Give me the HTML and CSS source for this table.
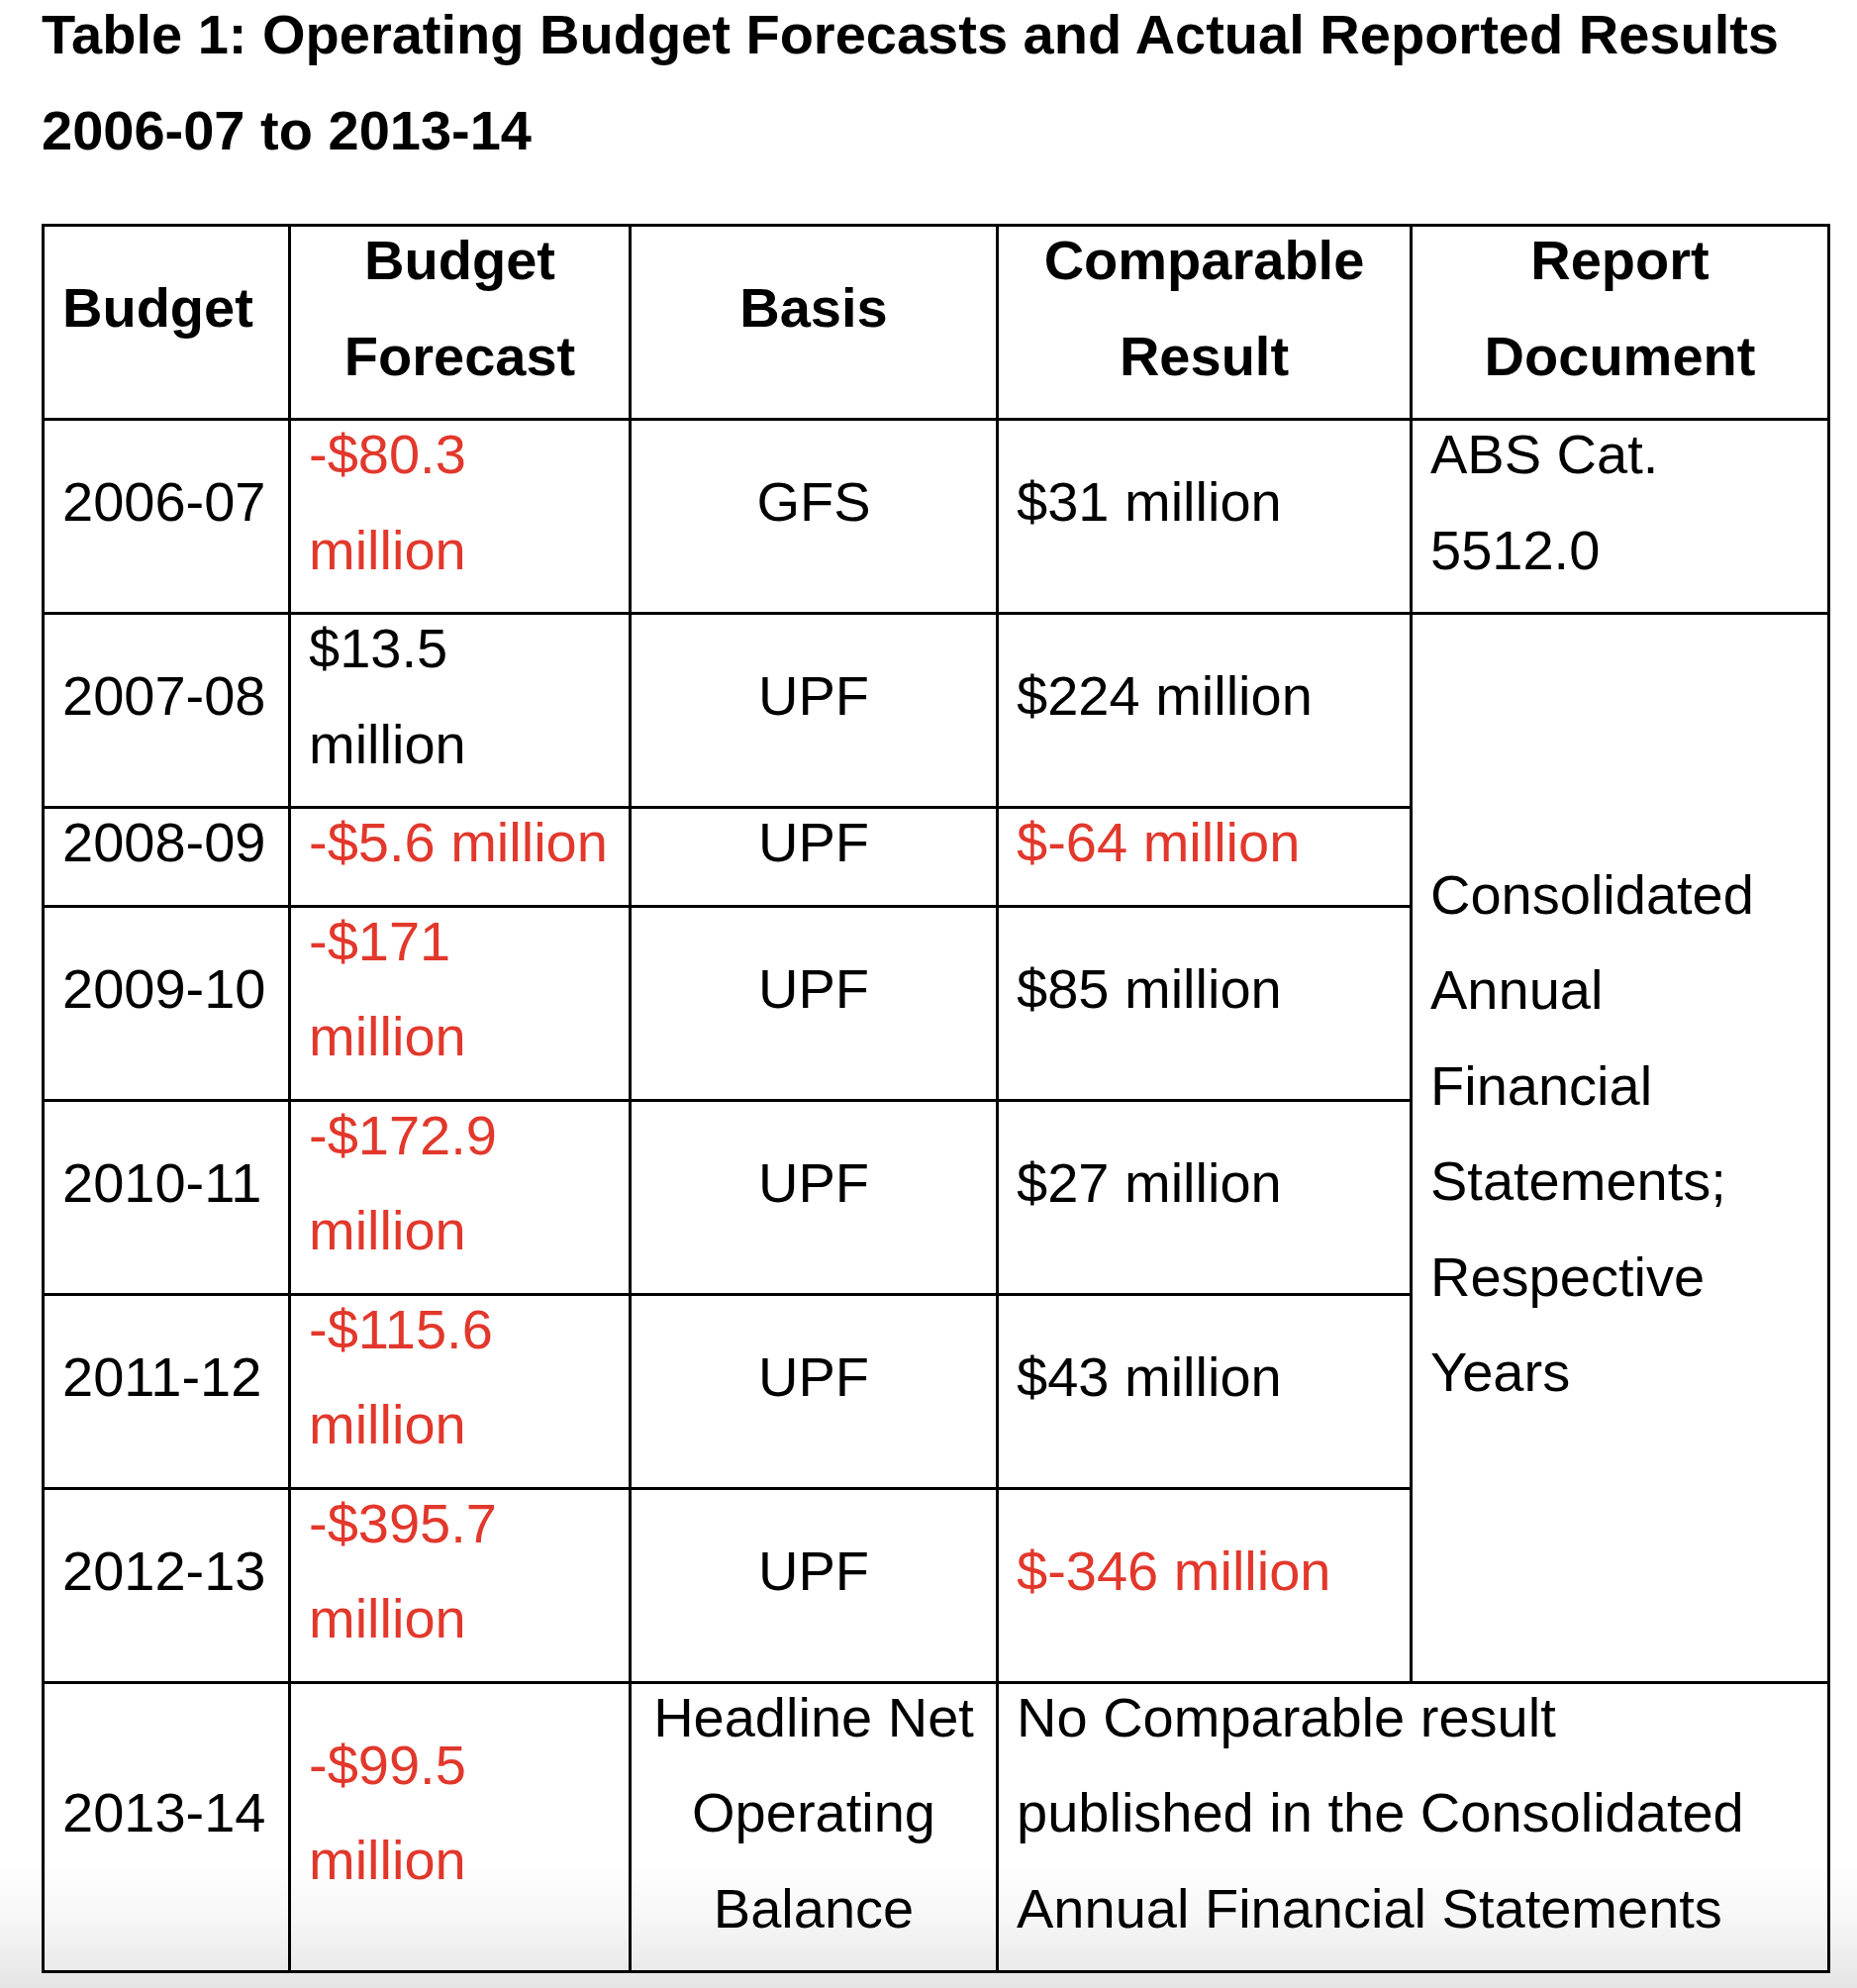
FILE: index.html
```html
<!DOCTYPE html>
<html lang="en">
<head>
<meta charset="utf-8">
<title>Table 1: Operating Budget Forecasts and Actual Reported Results</title>
<link rel="stylesheet" href="styles.css">
</head>
<body>
<div class="page">
  <h1 class="title">Table 1: Operating Budget Forecasts and Actual Reported Results 2006-07 to 2013-14</h1>
  <table class="budget-table">
    <colgroup>
      <col class="w-budget">
      <col class="w-forecast">
      <col class="w-basis">
      <col class="w-result">
      <col class="w-report">
    </colgroup>
    <thead>
      <tr>
        <th class="left"><div class="c">Budget</div></th>
        <th><div class="c">Budget Forecast</div></th>
        <th><div class="c">Basis</div></th>
        <th><div class="c">Comparable Result</div></th>
        <th><div class="c">Report Document</div></th>
      </tr>
    </thead>
    <tbody>
      <tr>
        <td><div class="c">2006-07</div></td>
        <td class="neg"><div class="c">-$80.3 million</div></td>
        <td class="center"><div class="c">GFS</div></td>
        <td><div class="c">$31 million</div></td>
        <td><div class="c">ABS Cat. 5512.0</div></td>
      </tr>
      <tr>
        <td><div class="c">2007-08</div></td>
        <td><div class="c">$13.5 million</div></td>
        <td class="center"><div class="c">UPF</div></td>
        <td><div class="c">$224 million</div></td>
        <td rowspan="6"><div class="c">Consolidated Annual Financial Statements; Respective Years</div></td>
      </tr>
      <tr>
        <td><div class="c">2008-09</div></td>
        <td class="neg"><div class="c">-$5.6 million</div></td>
        <td class="center"><div class="c">UPF</div></td>
        <td class="neg"><div class="c">$-64 million</div></td>
      </tr>
      <tr>
        <td><div class="c">2009-10</div></td>
        <td class="neg"><div class="c">-$171 million</div></td>
        <td class="center"><div class="c">UPF</div></td>
        <td><div class="c">$85 million</div></td>
      </tr>
      <tr>
        <td><div class="c">2010-11</div></td>
        <td class="neg"><div class="c">-$172.9 million</div></td>
        <td class="center"><div class="c">UPF</div></td>
        <td><div class="c">$27 million</div></td>
      </tr>
      <tr>
        <td><div class="c">2011-12</div></td>
        <td class="neg"><div class="c">-$115.6 million</div></td>
        <td class="center"><div class="c">UPF</div></td>
        <td><div class="c">$43 million</div></td>
      </tr>
      <tr>
        <td><div class="c">2012-13</div></td>
        <td class="neg"><div class="c">-$395.7 million</div></td>
        <td class="center"><div class="c">UPF</div></td>
        <td class="neg"><div class="c">$-346 million</div></td>
      </tr>
      <tr>
        <td><div class="c">2013-14</div></td>
        <td class="neg"><div class="c">-$99.5 million</div></td>
        <td class="center"><div class="c">Headline Net Operating Balance</div></td>
        <td colspan="2"><div class="c">No Comparable result<br>published in the Consolidated<br>Annual Financial Statements</div></td>
      </tr>
    </tbody>
  </table>
</div>
<div class="bottom-fade"></div>
</body>
</html>
```

FILE: styles.css
```css
* {
  box-sizing: border-box;
}

html,
body {
  margin: 0;
  background: #ffffff;
}

body {
  font-family: "Liberation Sans", Arial, Helvetica, sans-serif;
  color: #000000;
  font-size: 56px;
  line-height: 96.5px;
}

.page {
  padding: 0 26px 0 42px;
}

.title {
  font-size: 56px;
  font-weight: 700;
  line-height: 96.5px;
  margin: -13px 0 46px;
}

.budget-table {
  border-collapse: collapse;
  table-layout: fixed;
  width: 1807px;
}

.w-budget { width: 249px; }
.w-forecast { width: 344px; }
.w-basis { width: 371px; }
.w-result { width: 418px; }
.w-report { width: 422px; }

.budget-table th,
.budget-table td {
  border: 3px solid #000000;
  padding: 0 14px 0 18px;
  vertical-align: middle;
  text-align: left;
  font-weight: 400;
}

.budget-table th {
  font-weight: 700;
  text-align: center;
  padding: 0 14px;
}

.budget-table th.left {
  text-align: left;
  padding: 0 14px 0 18px;
}

.budget-table td.center {
  text-align: center;
  padding: 0 14px;
}

.c {
  margin: -14px 0 14px;
}

.neg {
  color: #e2382c;
}

.bottom-fade {
  position: fixed;
  left: 0;
  right: 0;
  bottom: 0;
  height: 130px;
  pointer-events: none;
  background: linear-gradient(to bottom, rgba(0, 0, 0, 0) 0%, rgba(0, 0, 0, 0.03) 45%, rgba(0, 0, 0, 0.1) 100%);
}
```
